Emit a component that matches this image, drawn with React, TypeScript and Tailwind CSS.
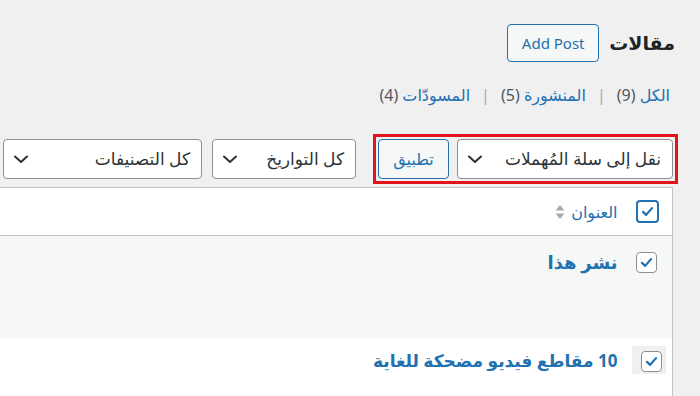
import React from 'react'

const font = { fontFamily: '"Noto Sans", "DejaVu Sans", sans-serif' }

function Chevron() {
  return (
    <svg width="16" height="16" viewBox="0 0 16 16" className="shrink-0">
      <path d="M2 5.5 L8 11 L14 5.5" fill="none" stroke="#2c3338" strokeWidth="2" strokeLinecap="round" strokeLinejoin="round" />
    </svg>
  )
}

function Select({ label, width }: { label: string; width: string }) {
  return (
    <div className={`flex h-[40px] items-center justify-between rounded-[4px] border border-[#8c8f94] bg-white pr-[11px] pl-[9px] text-[17px] text-[#2c3338] ${width}`}>
      <span>{label}</span>
      <Chevron />
    </div>
  )
}

function Check({ head, size }: { head?: boolean; size: string }) {
  return (
    <div className={`flex items-center justify-center rounded-[4px] bg-white ${size} ${head ? 'border-2 border-[#2271b1]' : 'border-[1.5px] border-[#8c8f94]'}`}>
      <svg width="15" height="15" viewBox="0 0 20 20">
        <path d="M4 10.5 L8.2 14.5 L16 5.5" fill="none" stroke="#2271b1" strokeWidth="3" strokeLinecap="round" strokeLinejoin="round" />
      </svg>
    </div>
  )
}

export default function App() {
  return (
    <div dir="rtl" style={font} className="h-[396px] w-[700px] overflow-hidden bg-[#f0f0f1] pr-[27px] text-[#1d2327]">
      {/* heading */}
      <div className="flex items-center gap-[10px] pt-[24px]">
        <h1 className="-mr-[2px] text-[19px] font-bold leading-none">مقالات</h1>
        <button className="h-[38px] w-[92px] rounded-[4px] border border-[#2271b1] bg-[#f6f7f7] text-[15px] text-[#2271b1]" dir="ltr">Add Post</button>
      </div>

      {/* status links */}
      <div className="mt-[25px] flex items-center gap-[11px] pr-[3px] text-[16px] leading-none">
        <span><span className="text-[#2271b1]">الكل</span> <span className="text-[#50575e]">(9)</span></span>
        <span className="text-[#a7aaad]">|</span>
        <span><span className="text-[#2271b1]">المنشورة</span> <span className="text-[#50575e]">(5)</span></span>
        <span className="text-[#a7aaad]">|</span>
        <span><span className="text-[#2271b1]">المسودّات</span> <span className="text-[#50575e]">(4)</span></span>
      </div>

      {/* tablenav */}
      <div className="mt-[36px] flex items-center">
        <div className="-mx-[5px] -my-[5px] flex items-center gap-[8px] border-[3px] border-[#e3131b] p-[2px]">
          <Select label="نقل إلى سلة المُهملات" width="w-[216px]" />
          <button className="h-[40px] w-[71px] rounded-[4px] border border-[#2271b1] bg-[#f6f7f7] text-[16px] text-[#2271b1]">تطبيق</button>
        </div>
        <div className="mr-[22px] flex items-center gap-[10px]">
          <Select label="كل التواريخ" width="w-[144px]" />
          <Select label="كل التصنيفات" width="w-[199px]" />
        </div>
      </div>

      {/* table */}
      <table className="mt-[8px] w-full border-collapse border-t border-r border-[#c3c4c7] bg-white">
        <thead>
          <tr className="h-[48px] border-b border-[#c3c4c7]">
            <td className="w-[55px] pr-[13px] align-middle"><Check head size="h-[23px] w-[23px]" /></td>
            <td className="align-middle">
              <span className="inline-flex items-center gap-[6px] text-[16px] text-[#2271b1]">
                العنوان
                <svg width="10" height="16" viewBox="0 0 10 16">
                  <path d="M5 1 L9.5 6.5 H0.5 Z" fill="#a7aaad" />
                  <path d="M5 15 L9.5 9.5 H0.5 Z" fill="#a7aaad" />
                </svg>
              </span>
            </td>
          </tr>
        </thead>
        <tbody>
          <tr className="h-[102px] bg-[#f6f7f7]">
            <td className="pr-[15px] pt-[16px] align-top"><Check size="h-[21px] w-[21px]" /></td>
            <td className="pt-[13px] align-top text-[18px] font-bold text-[#2271b1]">نشر هذا</td>
          </tr>
          <tr className="h-[60px] bg-white">
            <td className="pr-[6px] pt-[8px] align-top">
              <div className="flex h-[28px] w-[34px] items-end justify-center bg-[#f0f0f1] pb-[2px] pl-[5px]">
                <Check size="h-[21px] w-[21px]" />
              </div>
            </td>
            <td className="pt-[10px] align-top text-[17px] font-bold text-[#2271b1]">10 مقاطع فيديو مضحكة للغاية</td>
          </tr>
        </tbody>
      </table>
    </div>
  )
}
